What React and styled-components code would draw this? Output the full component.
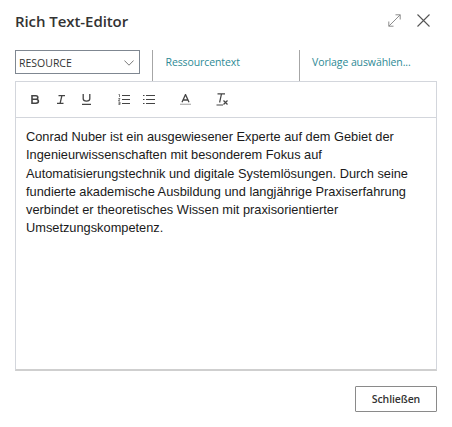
import React from "react";
import styled, { createGlobalStyle } from "styled-components";

const Global = createGlobalStyle`
  html, body { margin: 0; padding: 0; background: #fff; }
  body { font-family: "Open Sans", "Noto Sans", "Liberation Sans", sans-serif; }
`;

const Dialog = styled.div`
  width: 452px;
  height: 427px;
  box-sizing: border-box;
  padding: 0 15px;
  display: flex;
  flex-direction: column;
  background: #fff;
`;

const Header = styled.header`
  height: 50px;
  display: flex;
  align-items: flex-start;
  justify-content: space-between;
`;

const Title = styled.h1`
  margin: 10px 0 0;
  font-size: 15px;
  letter-spacing: -0.07px;
  line-height: 22px;
  font-weight: 600;
  color: #333;
`;

const HeaderActions = styled.div`
  display: flex;
  align-items: center;
  gap: 16px;
  margin: 14px 7px 0 0;
`;

const IconSvg = styled.svg`
  display: block;
  flex: none;
`;

const TabRow = styled.div`
  height: 31px;
  display: flex;
  align-items: flex-start;
`;

const Select = styled.div`
  width: 125px;
  height: 24px;
  box-sizing: border-box;
  border: 1px solid #7f8791;
  padding: 2px 5px 0 3px;
  display: flex;
  align-items: center;
  justify-content: space-between;
  font-size: 10.5px;
  color: #333;
`;

const Tab = styled.a`
  width: ${(p) => p.$width}px;
  height: 31px;
  box-sizing: border-box;
  border-left: 1px solid #a6a6a6;
  margin-left: ${(p) => p.$gap || 0}px;
  padding: 3px 0 0 ${(p) => p.$pad}px;
  font-size: 10.5px;
  letter-spacing: -0.1px;
  line-height: 18px;
  color: #2e8a95;
  white-space: nowrap;
`;

const Editor = styled.section`
  width: 422px;
  height: 290px;
  box-sizing: border-box;
  border: 1px solid #d3d6dc;
  border-bottom: 2px solid #cfcfcf;
  display: flex;
  flex-direction: column;
`;

const Toolbar = styled.div`
  height: 36px;
  box-sizing: border-box;
  border-bottom: 1px solid #d3d6dc;
  display: flex;
  align-items: center;
  padding-left: 15px;
`;

const ToolGap = styled.span`
  display: block;
  flex: none;
  width: ${(p) => p.$w}px;
`;

const Body = styled.div`
  padding: 10px 10px 0;
  font-family: "Liberation Sans", Arial, sans-serif;
  font-size: 12.8px;
  line-height: 18.3px;
  color: #1a1a1a;
`;

const Footer = styled.footer`
  display: flex;
  justify-content: flex-end;
  margin-top: 15px;
`;

const Button = styled.button`
  width: 82px;
  height: 26px;
  box-sizing: border-box;
  border: 1px solid #8a8a8a;
  border-radius: 1px;
  background: #fff;
  font-family: inherit;
  font-size: 10.5px;
  letter-spacing: -0.1px;
  font-weight: 600;
  color: #333;
  padding: 0;
`;

const Icon = ({ w, h, children }) => (
  <IconSvg width={w} height={h} viewBox={`0 0 ${w} ${h}`} fill="none">{children}</IconSvg>
);

const ink = "#444";

export default function App() {
  return (
    <Dialog>
      <Global />
      <Header>
        <Title>Rich Text-Editor</Title>
        <HeaderActions>
          <Icon w={13} h={13}>
            <path d="M0.8 12.2 L12.2 0.8 M7.5 0.8 H12.2 V5.5 M0.8 7.5 V12.2 H5.5" stroke="#8c8c8c" strokeWidth="1" />
          </Icon>
          <Icon w={13} h={13}>
            <path d="M0.5 0.5 L12.5 12.5 M12.5 0.5 L0.5 12.5" stroke="#555" strokeWidth="1.1" />
          </Icon>
        </HeaderActions>
      </Header>
      <TabRow>
        <Select>
          RESOURCE
          <Icon w={10} h={6}>
            <path d="M0.4 0.5 L5 5.2 L9.6 0.5" stroke="#6b6b6b" strokeWidth="0.9" />
          </Icon>
        </Select>
        <Tab $gap={12} $width={147} $pad={12.5}>Ressourcentext</Tab>
        <Tab $width={120} $pad={12}>Vorlage auswählen...</Tab>
      </TabRow>
      <Editor>
        <Toolbar>
          <Icon w={9} h={9}>
            <path d="M1 0.8 H5 C7.4 0.8 7.4 4.3 5 4.3 H1 M5 4.3 C8.2 4.3 8.2 8.2 5 8.2 H1 M1 0 V9" stroke={ink} strokeWidth="1.6" />
          </Icon>
          <ToolGap $w={17} />
          <Icon w={8} h={9}>
            <path d="M1.5 0.7 H8 M0 8.3 H6.5 M4.9 0.7 L3.1 8.3" stroke={ink} strokeWidth="1.3" />
          </Icon>
          <ToolGap $w={17} />
          <Icon w={9} h={11}>
            <path d="M1.2 0 V4.8 C1.2 8 7.8 8 7.8 4.8 V0 M0 10.3 H9" stroke={ink} strokeWidth="1.3" />
          </Icon>
          <ToolGap $w={27} />
          <Icon w={12} h={11}>
            <path d="M4 1.5 H12 M4 5.5 H12 M4 9.5 H12" stroke={ink} strokeWidth="1.2" />
            <path d="M0.5 0.4 H1.5 V3 M0.4 4.5 H2 L0.4 6.6 H2 M0.4 8 H2 V10.6 H0.4 M0.4 9.3 H2" stroke={ink} strokeWidth="0.7" />
          </Icon>
          <ToolGap $w={13} />
          <Icon w={12} h={11}>
            <path d="M3 1.5 H12 M3 5.5 H12 M3 9.5 H12 M0 1.5 H1.5 M0 5.5 H1.5 M0 9.5 H1.5" stroke={ink} strokeWidth="1.2" />
          </Icon>
          <ToolGap $w={25} />
          <Icon w={11} h={11}>
            <path d="M2 8.2 L5.5 0.5 L9 8.2 M3.2 6 H7.8" stroke={ink} strokeWidth="1.3" />
            <path d="M0 10.3 H11" stroke="#b5b5b5" strokeWidth="1.3" />
          </Icon>
          <ToolGap $w={25} />
          <Icon w={12} h={13}>
            <path d="M1.5 0.8 H9 M5.5 0.8 L3.6 9.5 M0.5 12 H7" stroke={ink} strokeWidth="1.2" />
            <path d="M7.5 7.5 L11.5 11.5 M11.5 7.5 L7.5 11.5" stroke={ink} strokeWidth="1.2" />
          </Icon>
        </Toolbar>
        <Body>
          Conrad Nuber ist ein ausgewiesener Experte auf dem Gebiet der Ingenieurwissenschaften mit besonderem Fokus auf Automatisierungstechnik und digitale Systemlösungen. Durch seine fundierte akademische Ausbildung und langjährige Praxiserfahrung verbindet er theoretisches Wissen mit praxisorientierter Umsetzungskompetenz.
        </Body>
      </Editor>
      <Footer>
        <Button>Schließen</Button>
      </Footer>
    </Dialog>
  );
}
